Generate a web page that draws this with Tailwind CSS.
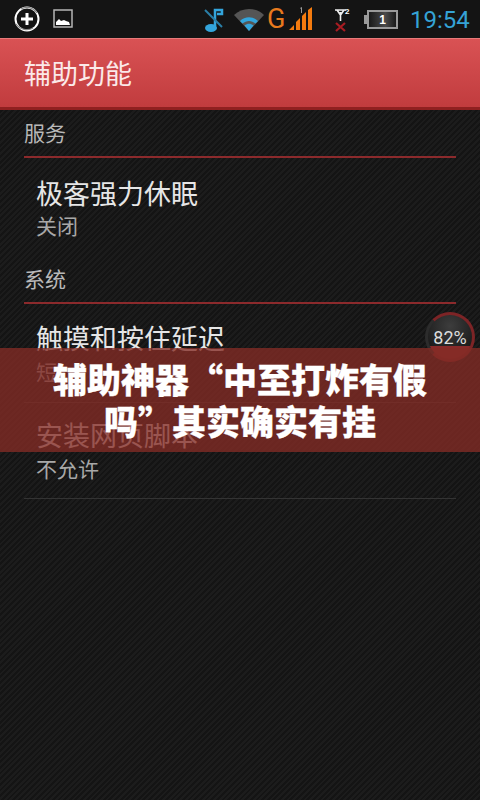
<!DOCTYPE html>
<html lang="zh-CN"><head><meta charset="utf-8">
<script src="https://cdn.jsdelivr.net/npm/@tailwindcss/browser@4"></script>
</head>
<body class="m-0">
<div class="relative w-[480px] h-[800px] overflow-hidden bg-[#191919] bg-[repeating-linear-gradient(135deg,#1c1c1c_0px,#1c1c1c_2px,#141414_2px,#141414_4px)] font-['Noto_Sans_CJK_SC','Noto_Sans',sans-serif]">
  <!-- status bar -->
  <div class="h-[38px] bg-[#141414] flex items-center relative">
    <svg class="ml-[14px] w-[26px] h-[26px]" viewBox="0 0 26 26" fill="none"><circle cx="13" cy="13" r="11.5" stroke="#fff" stroke-width="2"/><path d="M2 18c4 6 12 7 17 4M7 3c5-3 12-2 16 4" stroke="#888" stroke-width="1.2"/><path d="M13 7v12M7 13h12" stroke="#fff" stroke-width="3"/></svg>
    <svg class="ml-[13px] w-[20px] h-[20px]" viewBox="0 0 20 20" fill="none"><rect x="1" y="1" width="18" height="17" stroke="#b5b5b5" stroke-width="1.5"/><path d="M3 16v-3l3-3 2 2 3-1 2 1 3 1 1 3z" fill="#fff"/></svg>
    <svg class="absolute left-[204px] top-[8px] w-[20px] h-[24px]" viewBox="0 0 20 24" fill="none"><path d="M11 18V2h7v4h-5" stroke="#33a5dc" stroke-width="2.500"/><ellipse cx="7" cy="20" rx="6" ry="4" fill="#33a5dc"/><path d="M1 2l17 17" stroke="#2a7fa8" stroke-width="2"/></svg>
    <svg class="absolute left-[233px] top-[8px] w-[32px] h-[24px]" viewBox="0 0 32 24"><path d="M1 7C9-1 23-1 31 7L16 23z" fill="#555"/><path d="M7 13c5-5 13-5 18 0l-2.500 2.500c-4-3.500-9-3.500-13 0zM11.500 17.500c3-2.500 6-2.500 9 0L16 23z" fill="#33a5dc"/></svg>
    <span class="absolute left-[267px] top-[2px] text-[#e87a1e] text-[27px] leading-[34px] font-['Roboto']">G</span>
    <svg class="absolute left-[288px] top-[6px] w-[26px] h-[25px]" viewBox="0 0 26 25" fill="#f47b0f"><path d="M1 24l5-5v5zM8 24v-8l4-4v12zM14 24V10l4-4v18zM20 24V4l4-3v23z"/><path d="M12 2l2-1v6h-1V3z" fill="#999"/></svg>
    <svg class="absolute left-[333px] top-[8px] w-[16px] h-[24px]" viewBox="0 0 16 24" fill="none"><path d="M2 2h11M4 2l3.500 5L11 2M7.500 4v9" stroke="#eee" stroke-width="1.600"/><path d="M3 15l9 8M12 15l-9 8" stroke="#a81c22" stroke-width="2.200"/></svg>
    <span class="absolute left-[345px] top-[6px] text-white text-[8px] leading-[12px] font-bold font-['Liberation_Sans']">2</span>
    <div class="absolute left-[367px] top-[10px] w-[31px] h-[19px] border-2 border-[#9a9a9a] bg-[linear-gradient(90deg,#1a1a1a,#4a4a4a_60%,#1a1a1a)] flex items-center justify-center text-white text-[12px] font-bold font-['Liberation_Sans']">1</div>
    <div class="absolute left-[364px] top-[15px] w-[3px] h-[9px] bg-[#9a9a9a]"></div>
    <span class="absolute left-[410px] top-[1px] text-[#35a3d6] text-[24px] leading-[38px] font-['Roboto']">19:54</span>
  </div>
  <!-- header -->
  <div class="h-[72px] border-t border-[#e87a7a] border-b-[3px] border-b-[#8f2020] bg-[linear-gradient(180deg,#d95254,#c13c3e)] flex items-center pl-6">
    <span class="text-[27px] text-[#fbe9e9] leading-none -mt-[1px]">辅助功能</span>
  </div>
  <!-- list -->
  <div class="px-6">
    <div class="h-[48px] border-b-2 border-[#8c2a2c] flex items-center text-[21px] leading-none text-[#b8b8b8]"><span class="-mt-[2px]">服务</span></div>
    <div class="h-[97px] pl-3 pt-[18px]">
      <div class="text-[27px] leading-[34px] text-[#e6e6e6]">极客强力休眠</div>
      <div class="text-[21px] leading-[30px] text-[#a8a8a8]">关闭</div>
    </div>
    <div class="h-[49px] border-b-2 border-[#8c2a2c] flex items-center text-[21px] leading-none text-[#b8b8b8]"><span>系统</span></div>
    <div class="h-[99px] pl-3 pt-[17px] border-b border-[#333]">
      <div class="text-[27px] leading-[34px] text-[#e6e6e6]">触摸和按住延迟</div>
      <div class="text-[21px] leading-[30px] text-[#a8a8a8] mt-[1px]">短</div>
    </div>
    <div class="h-[96px] pl-3 pt-[15px] border-b border-[#333]">
      <div class="text-[27px] leading-[34px] text-[#e6e6e6]">安装网页脚本</div>
      <div class="text-[21px] leading-[30px] text-[#a8a8a8] mt-[1px]">不允许</div>
    </div>
  </div>
  <!-- floating percentage -->
  <div class="absolute left-[425px] top-[312px] w-[50px] h-[50px] rounded-full border-[3px] border-[#7d2426] border-l-[#2c2c2c] bg-[linear-gradient(180deg,transparent_70%,#8a2a2a_70%),radial-gradient(circle_at_50%_25%,#3d3d3d,#1c1c1c_70%)] flex items-center justify-center text-[18px] text-[#dcdcdc] font-['Roboto']">82%</div>
  <!-- overlay banner -->
  <div class="absolute left-0 top-[348px] w-[480px] h-[104px] bg-[#842b25]/[0.78] flex items-center justify-center px-[40px]">
    <p class="w-[400px] text-center text-white text-[34px] leading-[42px] font-black [-webkit-text-stroke:0.3px_white] -mt-[1px]">辅助神器“中至打炸有假吗”其实确实有挂</p>
  </div>
</div>
</body></html>
